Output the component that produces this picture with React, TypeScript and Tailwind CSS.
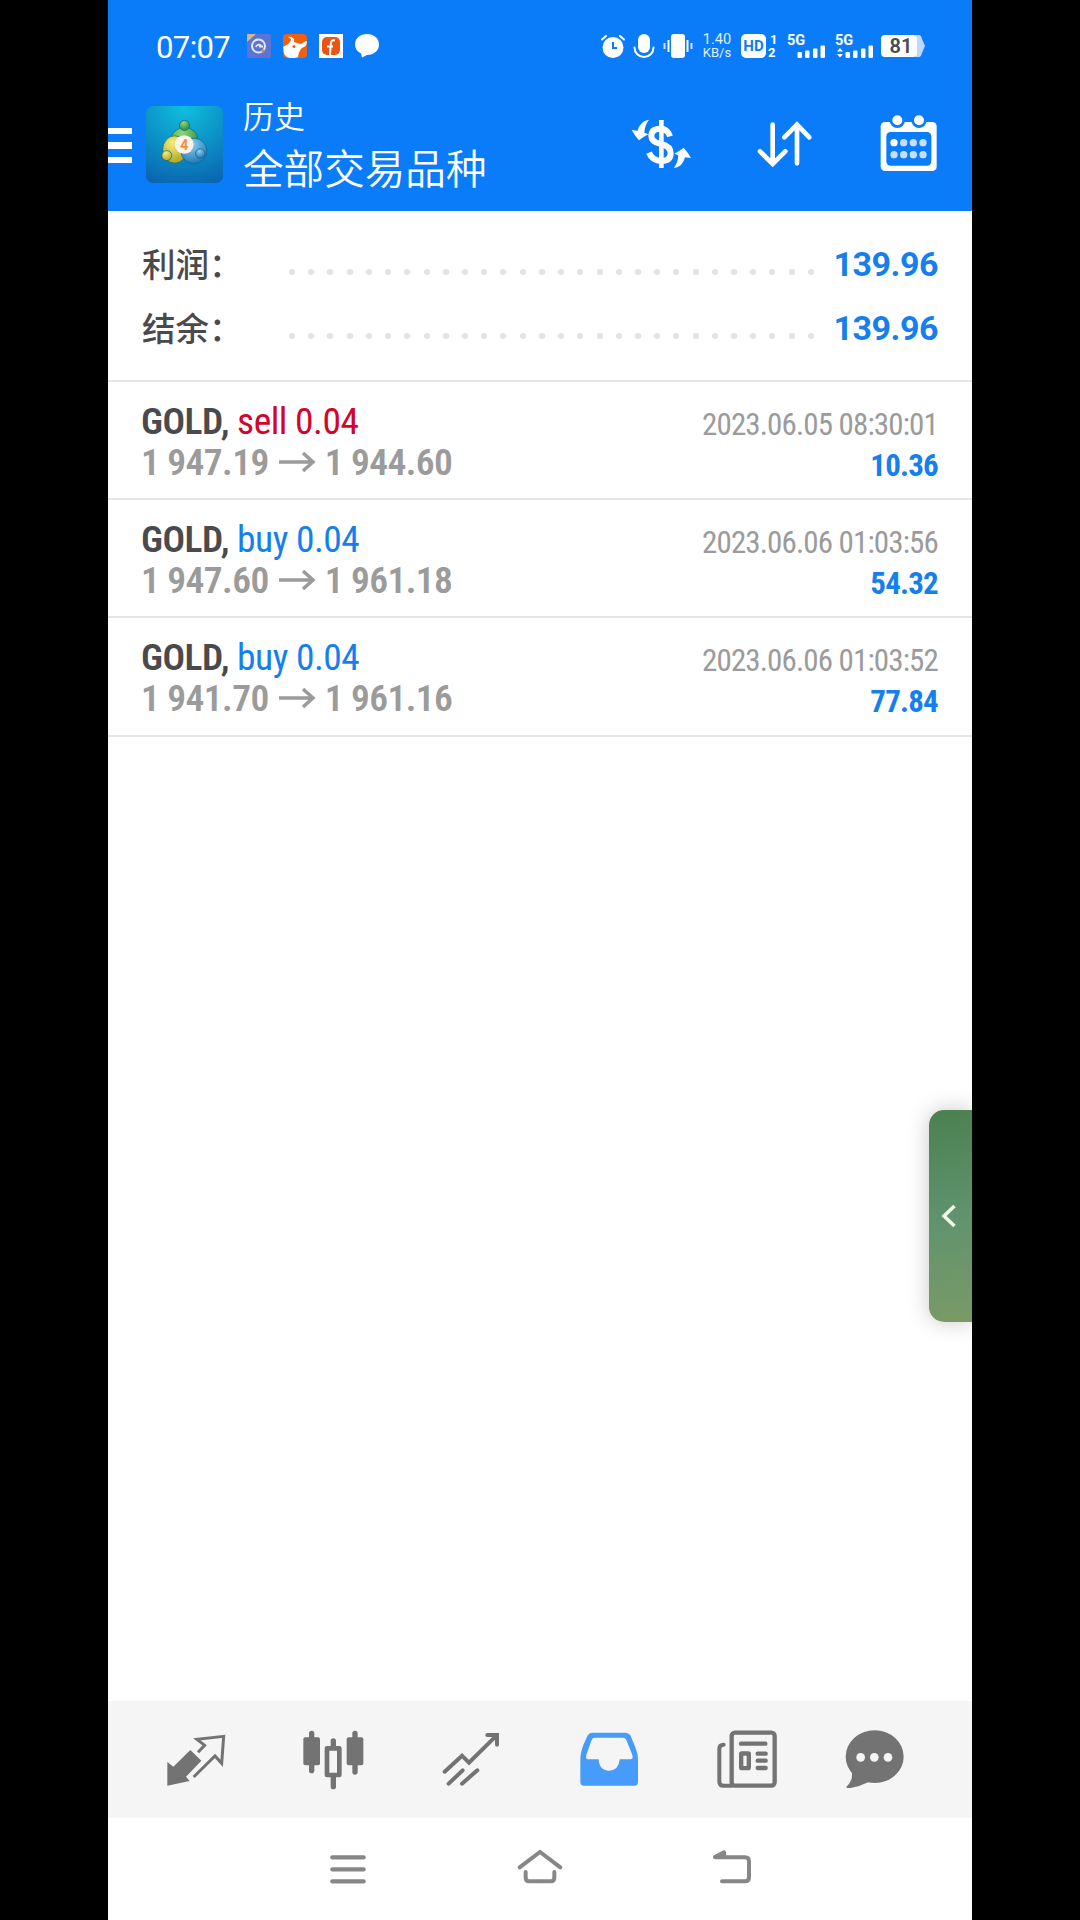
import React from 'react';

interface Deal {
  symbol: string;
  side: 'buy' | 'sell';
  volume: string;
  open: string;
  close: string;
  time: string;
  profit: string;
}

const DEALS: Deal[] = [
  { symbol: 'GOLD', side: 'sell', volume: '0.04', open: '1 947.19', close: '1 944.60', time: '2023.06.05 08:30:01', profit: '10.36' },
  { symbol: 'GOLD', side: 'buy', volume: '0.04', open: '1 947.60', close: '1 961.18', time: '2023.06.06 01:03:56', profit: '54.32' },
  { symbol: 'GOLD', side: 'buy', volume: '0.04', open: '1 941.70', close: '1 961.16', time: '2023.06.06 01:03:52', profit: '77.84' },
];

const TOTALS = [
  { label: '利润：', value: '139.96' },
  { label: '结余：', value: '139.96' },
];

const StatusBar: React.FC = () => (
  <div className="flex h-[92px] items-center pl-[48px] pr-[47px]">
    <span className="w-[91px] pt-[3px] text-[31px] leading-none tracking-[-0.6px]">07:07</span>
    <div className="flex gap-3">
      <svg className="size-6" viewBox="0 0 24 24">
        <rect width="24" height="24" rx="2" fill="#5c74d6" />
        <path d="M0 0H9L0 8Z" fill="#d8b48c" />
        <circle cx="11.5" cy="12" r="6.5" fill="none" stroke="#e6e8ff" strokeWidth="2" />
        <path d="M9 13a3 3 0 0 1 5-1.500M12 12.500h4" stroke="#e6e8ff" strokeWidth="1.800" fill="none" />
        <circle cx="16" cy="17" r="1.700" fill="#d98a4a" />
      </svg>
      <svg className="size-6" viewBox="0 0 24 24">
        <rect width="24" height="24" rx="4" fill="#f0600f" />
        <path d="M0 13C4 11 7 9 8 6C8 4 6 4 5 3C9 2 12 5 11 8L17 10C20 10 21 7 24 7C24 11 22 13 19 14C17 16 16 18 15 23C10 25 4 24 3 22C0 20 1 16 0 13Z" fill="#fff" />
        <circle cx="11" cy="12.500" r="1.500" fill="#f0600f" />
      </svg>
      <svg className="size-6" viewBox="0 0 24 24">
        <rect width="24" height="24" fill="#fff" />
        <rect x="3" y="3" width="18" height="18" rx="5" fill="#ea5514" />
        <path d="M16 6.500c-3-1-4 .5-4.200 3.500l-.8 11M8 12.500h6" stroke="#fff" strokeWidth="2" fill="none" />
      </svg>
      <svg className="size-6" viewBox="0 0 24 24">
        <path d="M12 0C19 0 24 4.500 24 10.500S19 21 12 21L7 23.500L6 19.500C2 17.500 0 14.500 0 10.500C0 4.500 5 0 12 0Z" fill="#fff" />
      </svg>
    </div>

    <div className="ml-auto flex items-center">
      <svg className="h-6 w-6" viewBox="0 0 24 24">
        <circle cx="12" cy="13.500" r="10.500" fill="#fff" />
        <path d="M1 5.500L5 2M23 5.500L19 2" stroke="#fff" strokeWidth="2" strokeLinecap="round" />
        <path d="M12 8v6h4" stroke="#0a7cf9" strokeWidth="2" fill="none" />
      </svg>
      <svg className="ml-2 h-6 w-[22px]" viewBox="0 0 22 24">
        <rect x="5" y="0" width="12" height="19" rx="6" fill="#fff" />
        <path d="M1.500 13a9.500 9.500 0 0 0 19 0" stroke="#fff" strokeWidth="2" fill="none" strokeLinecap="round" transform="translate(0 .5)" />
      </svg>
      <svg className="ml-2 h-6 w-[30px]" viewBox="0 0 30 24">
        <rect x="8" y="0" width="14" height="24" rx="3" fill="#fff" />
        <path d="M5.500 6v12M24.500 6v12" stroke="#fff" strokeWidth="2" />
        <path d="M1.500 9v6M28.500 9v6" stroke="#cfe2ff" strokeWidth="2" />
      </svg>
      <div className="ml-[8px] w-[32px] text-center text-[14.500px] leading-[13px] text-[#e4efff]">
        <div>1.40</div>
        <div className="text-[13px]">KB/s</div>
      </div>
      <div className="ml-[8px] flex h-6 w-[25px] items-center justify-center rounded-[5px] bg-white text-[15px] font-bold text-[#0a7cf9]">HD</div>
      <div className="ml-0.5 w-[10px] text-[13px] leading-[13px] font-bold">
        <div className="pl-0.5">1</div>
        <div>2</div>
      </div>
      <Signal />
      <Signal data />
      <svg className="ml-[7px] h-6 w-[44px]" viewBox="0 0 44 24">
        <path d="M34 1h4q2 0 3 4l3 7l-3 7q-1 4-3 4h-4z" fill="#bcd8ff" />
        <rect x="0" y="1" width="36" height="22" rx="4" fill="#fff" />
        <text x="20" y="19" textAnchor="middle" fontSize="20" fontWeight="600" fill="#4b4b4f">81</text>
      </svg>
    </div>
  </div>
);

const Signal: React.FC<{ data?: boolean }> = ({ data }) => (
  <svg className="ml-[9px] h-[30px] w-[39px]" viewBox="0 0 39 30" fill="#fff">
    <text x="0" y="14" fontSize="14.500" fontWeight="700">5G</text>
    {data && <path d="M2 20.500L5 17L8 20.500ZM2 23L5 26.500L8 23Z" />}
    <rect x="10.500" y="21" width="4.500" height="6" rx="1" />
    <rect x="18" y="19.500" width="4.500" height="7.500" rx="1" />
    <rect x="26" y="17.500" width="4.500" height="9.500" rx="1" />
    <rect x="33.500" y="14.500" width="4.500" height="12.500" rx="1" />
  </svg>
);

const AppLogo: React.FC = () => (
  <svg className="ml-[14px] size-[77px]" viewBox="0 0 230 230">
    <defs>
      <radialGradient id="logo-bg" cx="0.5" cy="0" r="1.05">
        <stop offset="0" stopColor="#10c0de" />
        <stop offset="0.5" stopColor="#0c94c8" />
        <stop offset="1" stopColor="#0a66b2" />
      </radialGradient>
      <radialGradient id="logo-green" cx="0.4" cy="0.25" r="0.8">
        <stop offset="0" stopColor="#8fd67a" />
        <stop offset="1" stopColor="#238a3f" />
      </radialGradient>
      <radialGradient id="logo-yellow" cx="0.4" cy="0.25" r="0.8">
        <stop offset="0" stopColor="#f5ec7e" />
        <stop offset="1" stopColor="#a8a51f" />
      </radialGradient>
      <radialGradient id="logo-blue" cx="0.4" cy="0.25" r="0.8">
        <stop offset="0" stopColor="#8ad3f2" />
        <stop offset="1" stopColor="#1a74b5" />
      </radialGradient>
    </defs>
    <rect width="230" height="230" rx="20" fill="url(#logo-bg)" />
    <g stroke="#12607a" strokeWidth="2">
      <ellipse cx="115" cy="100" rx="40" ry="36" fill="url(#logo-green)" />
      <circle cx="115" cy="58" r="15" fill="url(#logo-green)" />
      <ellipse cx="86" cy="130" rx="36" ry="41" fill="url(#logo-yellow)" />
      <ellipse cx="143" cy="134" rx="39" ry="38" fill="url(#logo-blue)" />
      <circle cx="62" cy="148" r="15" fill="url(#logo-yellow)" />
      <circle cx="162" cy="142" r="14" fill="url(#logo-blue)" />
    </g>
    <circle cx="114" cy="115" r="28" fill="#fbf3e6" />
    <text x="114" y="130" textAnchor="middle" fontSize="42" fontWeight="700" fill="#f0913d">4</text>
  </svg>
);

const SWAP_ARROW = 'M54 17Q26 22 20 50L2 48Q12 66 24 79Q38 68 52 61L40 56Q41 34 54 17Z';

const Header: React.FC = () => (
  <header className="h-[211px] bg-[#0a7cf9] text-white">
    <StatusBar />
    <div className="flex h-[104px] items-center pr-[33px]">
      <div className="flex w-6 flex-col gap-[8px] pt-[3px]">
        <div className="h-[6.500px] bg-white" />
        <div className="h-[6.500px] bg-white" />
        <div className="h-[6.500px] bg-white" />
      </div>
      <AppLogo />
      <div className="ml-5 flex flex-col font-['Noto_Sans_CJK_SC',sans-serif] font-[350]">
        <div className="-mt-px text-[31px] leading-[47px]">历史</div>
        <div className="text-[40.600px] leading-[58px]">全部交易品种</div>
      </div>
      <div className="ml-auto flex gap-16">
        <svg className="-mr-px size-[60px] -translate-x-px" viewBox="0 0 180 180">
          <path d="M91 18V162" stroke="#fff" strokeWidth="14" />
          <path d="M117 67Q110 44 88 44Q61 44 61 66Q61 84 90 90Q119 97 119 118Q119 141 91 141Q64 141 54 116" fill="none" stroke="#fff" strokeWidth="18" />
          <path d={SWAP_ARROW} fill="#fff" />
          <path d={SWAP_ARROW} fill="#fff" transform="rotate(180 91 90)" />
        </svg>
        <svg className="size-[60px]" viewBox="0 0 180 180" fill="none" stroke="#fff" strokeWidth="14" strokeLinecap="round">
          <path d="M53 32V148M15 112L53 150L91 112" />
          <path d="M126 148V32M88 70L126 32L163 70" />
        </svg>
        <svg className="size-[60px]" viewBox="0 0 180 180">
          <rect x="5" y="24" width="168" height="147" rx="13" fill="#fff" />
          <rect x="22" y="54" width="135" height="101" rx="13" fill="#0a7cf9" />
          {[55, 120].map(x => (
            <circle key={x} cx={x} cy="19" r="19" fill="#fff" stroke="#0a7cf9" strokeWidth="8" />
          ))}
          {[86, 122].map(y =>
            [45, 74, 103, 132].map(x => (
              <circle key={`${x}-${y}`} cx={x} cy={y} r="11" fill={x === 45 && y === 86 ? '#fff' : '#c6deff'} />
            ))
          )}
        </svg>
      </div>
    </div>
  </header>
);

const Totals: React.FC = () => (
  <section className="h-[171px] border-b-2 border-[#e5e5e5] pt-[21px] pr-[34px] pl-[34px]">
    {TOTALS.map(({ label, value }) => (
      <div key={label} className="flex h-16 items-center">
        <span className="-mt-0.5 w-[147px] font-['Noto_Sans_CJK_SC',sans-serif] text-[33.500px] font-medium text-[#4a4a4c]">{label}</span>
        <div className="mt-[15px] flex w-[525px] justify-between">
          {Array.from({ length: 28 }, (_, i) => (
            <span key={i} className="size-[6px] rounded-full bg-[#e2e2e2]" />
          ))}
        </div>
        <span className="ml-auto pt-px text-[34px] font-bold tracking-[-0.5px] text-[#167fee]">{value}</span>
      </div>
    ))}
  </section>
);

const DealRow: React.FC<{ deal: Deal }> = ({ deal }) => (
  <div className="flex h-[118.200px] justify-between border-b-2 border-[#e5e5e5] pt-[19px] pr-[34px] pl-[33px] font-['Roboto_Condensed','Roboto',sans-serif] font-stretch-[75%]">
    <div className="text-[37.500px] leading-[41px] whitespace-nowrap">
      <div className="tracking-[-0.5px]">
        <span className="font-semibold text-[#4a4a4c]">{deal.symbol}, </span>
        <span className={deal.side === 'sell' ? 'text-[#d2042d]' : 'text-[#167fee]'}>{deal.side} {deal.volume}</span>
      </div>
      <div className="flex items-center font-semibold tracking-[-0.600px] text-[#9b9b9b]">
        <span>{deal.open}</span>
        <svg className="mx-[9px] h-6 w-[38px]" viewBox="0 0 38 24" fill="none" stroke="#9b9b9b" strokeWidth="3.500">
          <path d="M1 11H35M25 2L35 11L25 20" />
        </svg>
        <span>{deal.close}</span>
      </div>
    </div>
    <div className="pt-[3px] text-right text-[31px] leading-[41px] whitespace-nowrap">
      <div className="tracking-[-0.850px] text-[#9b9b9b]">{deal.time}</div>
      <div className="font-bold tracking-[-0.800px] text-[#167fee]">{deal.profit}</div>
    </div>
  </div>
);

const TabBar: React.FC = () => (
  <nav className="flex h-[117px] items-center gap-[78px] bg-[#f5f5f5] pl-[58px] text-[#737373]">
    {/* quotes */}
    <svg className="size-[60px] shrink-0" viewBox="0 0 180 180">
      <path d="M4 96L22 110L73 60L106 92L60 140L71 153L4 167Z" fill="currentColor" />
      <path d="M96 67L116 46L93 28L173 19L167 100L147 78L83 141" fill="none" stroke="currentColor" strokeWidth="9" />
    </svg>
    {/* charts */}
    <svg className="size-[60px] shrink-0 overflow-visible" viewBox="0 0 180 180" fill="currentColor">
      <rect x="-2" y="22" width="50" height="84" rx="6" />
      <rect x="128" y="22" width="50" height="84" rx="6" />
      <path d="M23 10V122M153 10V126M88 33V55M88 140V170" stroke="currentColor" strokeWidth="16" strokeLinecap="round" />
      <rect x="69" y="55" width="37" height="80" fill="#f5f5f5" stroke="currentColor" strokeWidth="14" strokeLinejoin="round" />
    </svg>
    {/* trade */}
    <svg className="size-[60px] shrink-0" viewBox="0 0 180 180" fill="none" stroke="currentColor" strokeWidth="12" strokeLinecap="round">
      <path d="M8 125L60 77L81 98L164 16M136 15H165V44M20 161L62 121M60 161L106 121" />
    </svg>
    {/* history */}
    <svg className="size-[60px] shrink-0 text-[#479bfa]" viewBox="0 0 180 180">
      <path
        fill="currentColor"
        fillRule="evenodd"
        d="M1 88Q1 70 10 45L22 18Q27 8 38 8H136Q146 8 151 16L166 52Q174 72 174 88V156Q174 167 163 167H12Q1 167 1 156ZM45 23Q38 23 35 30L20 72Q18 78 18 82Q18 88 24 88H56Q58 122 87 122Q116 122 119 88H152Q158 88 158 82Q158 78 155 70L139 30Q136 23 129 23Z"
      />
    </svg>
    {/* news */}
    <svg className="-ml-px mr-px size-[60px] shrink-0" viewBox="0 0 180 180" fill="none" stroke="currentColor" strokeWidth="13" strokeLinecap="round">
      <rect x="44" y="8" width="129" height="159" rx="10" />
      <path d="M20 44Q7 44 7 56V155Q7 167 20 167H44" strokeWidth="12" />
      <path d="M72 41H145M122 71H146M122 92H146M122 114H146" />
      <rect x="72.500" y="70.500" width="23" height="44" rx="2" />
    </svg>
    {/* messages */}
    <svg className="-ml-3 size-[60px] shrink-0" viewBox="0 0 180 180" fill="currentColor">
      <ellipse cx="92" cy="80" rx="87" ry="79" />
      <path d="M22 120Q30 150 7 170Q6 175 20 174Q46 170 74 156Z" />
      <g fill="#f5f5f5">
        <circle cx="50" cy="82" r="13" />
        <circle cx="91" cy="82" r="13" />
        <circle cx="132" cy="82" r="13" />
      </g>
    </svg>
  </nav>
);

const SystemNav: React.FC = () => (
  <div className="flex h-[102px] items-center justify-center gap-[144px] text-[#878787]">
    <svg className="size-12" viewBox="0 0 144 144" stroke="currentColor" strokeWidth="13" strokeLinecap="round">
      <path d="M25 37H119M25 73H119M25 109H119" />
    </svg>
    <svg className="size-12" viewBox="0 0 144 144" fill="none" stroke="currentColor" strokeWidth="12" strokeLinecap="round">
      <path d="M11 67L72 21L133 67M29 81V98Q29 109 40 109H104Q115 109 115 98V81" />
    </svg>
    <svg className="size-12" viewBox="0 0 144 144" fill="none" stroke="currentColor" strokeWidth="12" strokeLinecap="round" strokeLinejoin="round">
      <path d="M42 109H111Q123 109 123 97V49Q123 37 111 37H22" />
      <path d="M21 36L48 22V36Z" fill="currentColor" />
    </svg>
  </div>
);

export default function App() {
  return (
    <div className="flex h-[1920px] w-[1080px] justify-center bg-black font-['Roboto',sans-serif]">
      <div className="relative flex w-[864px] flex-col overflow-hidden bg-white">
        <Header />
        <Totals />
        <main className="flex-1">
          {DEALS.map(deal => <DealRow key={`${deal.time}-${deal.profit}`} deal={deal} />)}
        </main>
        <TabBar />
        <SystemNav />

        {/* slide-out panel handle */}
        <div className="absolute top-[1110px] right-0 flex h-[212px] w-[43px] items-center rounded-l-[15px] bg-linear-170 from-[#4b8050] via-[#5f936d] to-[#7a9a66] pl-[12px] shadow-[0_0_22px_rgba(0,0,0,0.22)]">
          <svg className="h-6 w-[15px]" viewBox="0 0 15 24" fill="none" stroke="#f4fbe9" strokeWidth="3.500">
            <path d="M13.500 2L3 12L13.500 22" />
          </svg>
        </div>
      </div>
    </div>
  );
}
